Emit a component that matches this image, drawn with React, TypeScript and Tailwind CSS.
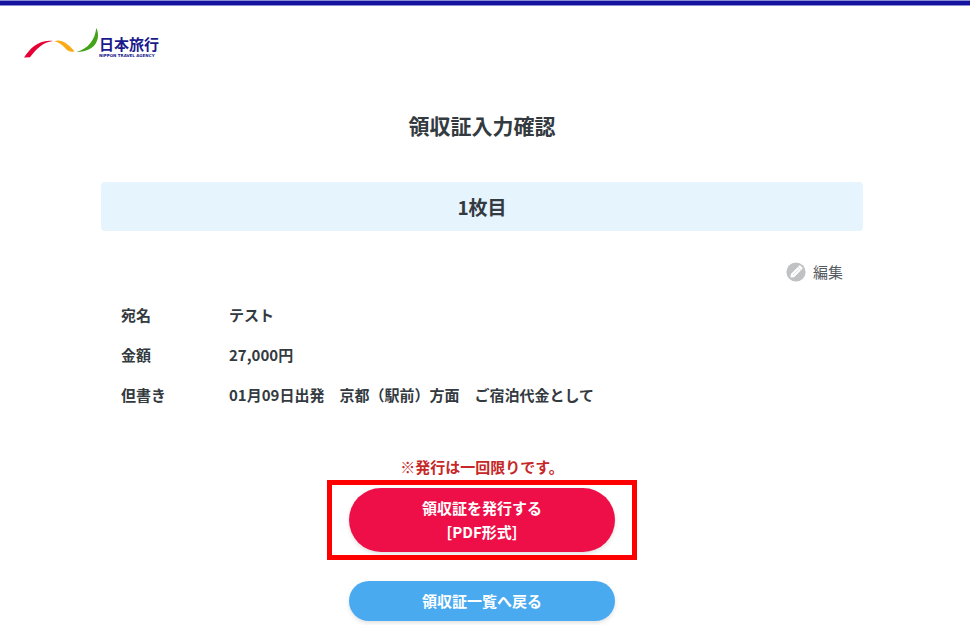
const details = [
  { label: '宛名', value: 'テスト' },
  { label: '金額', value: '27,000円' },
  { label: '但書き', value: '01月09日出発　京都（駅前）方面　ご宿泊代金として' },
]

function Logo() {
  return (
    <a href="#" className="inline-flex items-end text-[#1a1a8c]">
      <svg viewBox="0 0 75 30" className="h-[30px] w-[75px]" aria-hidden="true">
        <path d="M0 29.500C6 20.500 15 11 29 13C19 14.500 13 20 6 29.200Z" fill="#e60033" />
        <path d="M30.500 13.200C37 11 43 15 50.500 23.200C47 24.500 44 23.500 41 20C37.500 16.500 35 14 30.500 13.200Z" fill="#fbab18" />
        <path d="M52.500 23.800C64 21 71 12 72.300 0C76.500 8 74 24 52.500 23.800Z" fill="#43a41c" />
      </svg>
      <span className="flex flex-col">
        <span className="text-[15px] leading-[18px] font-bold">日本旅行</span>
        <span className="font-['DejaVu_Sans',sans-serif] text-[4px] leading-[5px] font-bold whitespace-nowrap">
          NIPPON TRAVEL AGENCY
        </span>
      </span>
    </a>
  )
}

function PencilIcon() {
  return (
    <svg viewBox="0 0 20 20" className="h-5 w-5" aria-hidden="true">
      <circle cx="10" cy="10" r="9.600" fill="#bfc1c3" />
      <g transform="rotate(45 10 10)">
        <path d="M7.700 3.400a1 1 0 0 1 1-1h2.600a1 1 0 0 1 1 1V15L10 17.800L7.700 15Z" fill="#fff" />
        <path d="M7.700 5.200h4.600M10 7v7.500" stroke="#bfc1c3" strokeWidth="0.500" />
      </g>
    </svg>
  )
}

export default function App() {
  return (
    <div className="bg-white font-['Noto_Sans_CJK_JP',sans-serif] text-[15px] leading-6 text-[#333a40]">
      <div className="h-[6px] border-y border-[#8c8cd2] bg-[#1414a0]" />
      <header className="flex px-6 pt-[22px]">
        <Logo />
      </header>

      <main className="pt-[51px] pr-[6px]">
        <h1 className="text-center text-[21px] leading-8 font-bold">領収証入力確認</h1>

        <section className="mx-auto mt-[41px] w-full max-w-[762px]">
          <h2 className="rounded-sm bg-[#e6f4fe] py-2 text-center text-[19px] leading-[33px] font-bold">
            1枚目
          </h2>

          <div className="flex justify-end px-5 pt-[29px]">
            <button type="button" className="flex items-center gap-[7px] text-[#555b60]">
              <PencilIcon />
              編集
            </button>
          </div>

          <dl className="mt-[19px] flex flex-col gap-4 px-5 font-bold">
            {details.map(({ label, value }) => (
              <div key={label} className="flex">
                <dt className="w-[108px] shrink-0">{label}</dt>
                <dd>{value}</dd>
              </div>
            ))}
          </dl>
        </section>

        <div className="mt-12 flex flex-col items-center">
          <p className="font-bold text-[#c62828]">※発行は一回限りです。</p>
          <div className="mt-px border-[5px] border-[#ff0000] px-[17px] py-[3px]">
            <button
              type="button"
              className="w-[266px] rounded-full bg-[#ef0f48] py-2 font-bold text-white shadow-[0_2px_4px_rgba(0,0,0,0.12)]"
            >
              領収証を発行する
              <br />
              [PDF形式]
            </button>
          </div>
          <button
            type="button"
            className="mt-[21px] mb-1 w-[266px] rounded-full bg-[#4aaaf0] py-2 font-bold text-white shadow-[0_2px_4px_rgba(0,0,0,0.12)]"
          >
            領収証一覧へ戻る
          </button>
        </div>
      </main>
    </div>
  )
}
